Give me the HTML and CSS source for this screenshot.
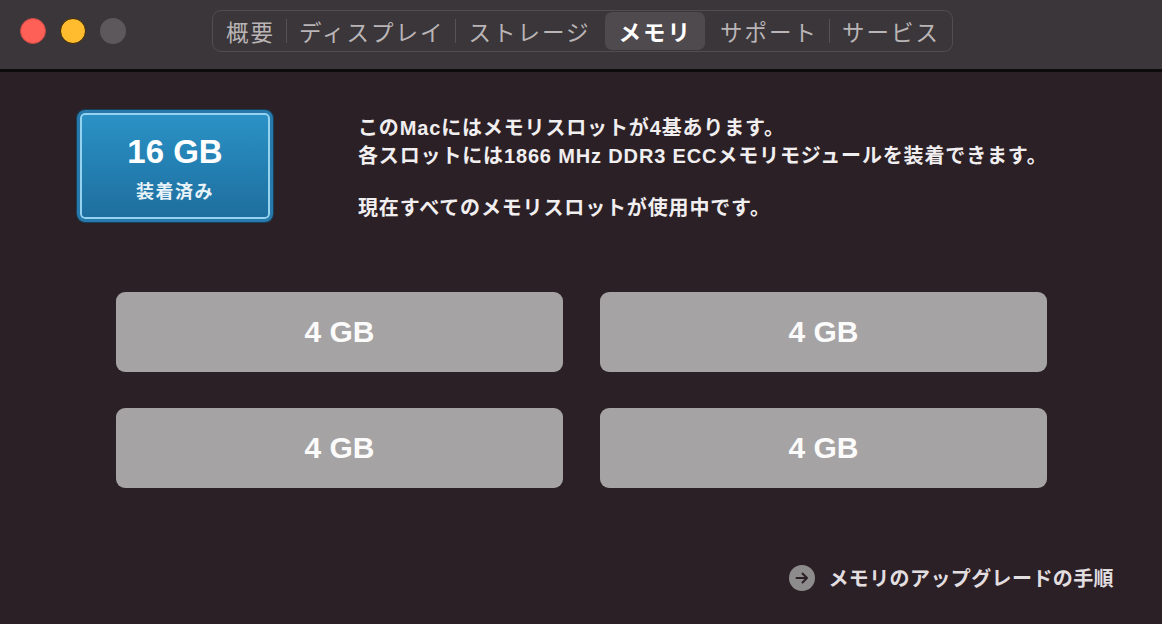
FILE: index.html
```html
<!DOCTYPE html>
<html lang="ja">
<head>
<meta charset="utf-8">
<title>このMacについて - メモリ</title>
<link rel="stylesheet" href="styles.css">
</head>
<body>
<div class="window">
  <header class="titlebar">
    <div class="lights">
      <span class="light red"></span>
      <span class="light yellow"></span>
      <span class="light gray"></span>
    </div>
    <nav class="tabs">
      <span class="tab">概要</span>
      <span class="sep"></span>
      <span class="tab">ディスプレイ</span>
      <span class="sep"></span>
      <span class="tab">ストレージ</span>
      <span class="tab active">メモリ</span>
      <span class="tab">サポート</span>
      <span class="sep"></span>
      <span class="tab">サービス</span>
    </nav>
  </header>
  <main class="content">
    <section class="summary">
      <div class="badge">
        <div class="badge-size">16 GB</div>
        <div class="badge-label">装着済み</div>
      </div>
      <div class="desc">
        <p>このMacにはメモリスロットが4基あります。<br>各スロットには1866 MHz DDR3 ECCメモリモジュールを装着できます。</p>
        <p>現在すべてのメモリスロットが使用中です。</p>
      </div>
    </section>
    <section class="slots">
      <div class="slot">4 GB</div>
      <div class="slot">4 GB</div>
      <div class="slot">4 GB</div>
      <div class="slot">4 GB</div>
    </section>
    <div class="link-row">
      <a class="upgrade" href="#">
        <svg class="arrow" width="26" height="26" viewBox="0 0 26 26">
          <circle cx="13" cy="13" r="13" fill="#8e8b8c"/>
          <path d="M7.5 13h10M13.5 8.5l4.5 4.5-4.5 4.5" fill="none" stroke="#2b2025" stroke-width="2" stroke-linecap="round" stroke-linejoin="round"/>
        </svg>
        <span>メモリのアップグレードの手順</span>
      </a>
    </div>
  </main>
</div>
</body>
</html>
```

FILE: styles.css
```css
* { box-sizing: border-box; }
html, body {
  margin: 0;
  padding: 0;
  width: 1162px;
  height: 624px;
  overflow: hidden;
  background: #2b2025;
  font-family: "Liberation Sans", "Noto Sans CJK JP", sans-serif;
}
.window {
  width: 1162px;
  height: 624px;
  display: flex;
  flex-direction: column;
}
.titlebar {
  height: 72px;
  flex: none;
  background: #3b3639;
  border-bottom: 3px solid #0e0b0d;
  display: flex;
  align-items: center;
  padding: 0 0 7px 20px;
}
.lights {
  display: flex;
  gap: 14px;
  width: 192px;
}
.light {
  width: 26px;
  height: 26px;
  border-radius: 50%;
  display: block;
}
.red { background: #fe5f57; border: 1px solid #c94a44; }
.yellow { background: #febc2e; border: 1px solid #3d2a05; }
.gray { background: #5c585b; }
.tabs {
  display: flex;
  align-items: center;
  height: 42px;
  border: 1px solid #524d50;
  border-radius: 9px;
  padding: 0 1px;
  font-family: "Noto Sans CJK JP", sans-serif;
}
.tab {
  font-size: 22.5px;
  letter-spacing: 2px;
  color: #b9b5b7;
  padding: 0 11px 0 12px;
  height: 38px;
  line-height: 38px;
  border-radius: 7px;
}
.tab.active {
  background: #4f4a4e;
  color: #ffffff;
  font-weight: 700;
  padding: 0 13px 0 14px;
  margin: 0 3px;
}
.sep {
  width: 1px;
  height: 24px;
  background: #575255;
}
.content {
  flex: 1;
  display: flex;
  flex-direction: column;
}
.summary {
  display: flex;
  padding: 38px 0 0 77px;
}
.badge {
  width: 196px;
  height: 112px;
  border-radius: 8px;
  border: 3px solid #2679aa;
  box-shadow: 0 0 0 1px #173f58, inset 0 0 0 2px #95d2ef;
  background: linear-gradient(#2b92c6, #1d6e9e);
  display: flex;
  flex-direction: column;
  align-items: center;
  color: #ffffff;
}
.badge-size {
  font-size: 33px;
  font-weight: 700;
  margin-top: 20px;
  line-height: 38px;
}
.badge-label {
  font-family: "Noto Sans CJK JP", sans-serif;
  font-size: 18px;
  font-weight: 700;
  letter-spacing: 1.5px;
  margin-top: 6px;
  color: #e8f3f9;
}
.desc {
  margin: 4px 0 0 85px;
  color: #f1eef0;
  font-size: 20px;
  letter-spacing: 0.85px;
  line-height: 28px;
  font-weight: 700;
}
.desc p { margin: 0 0 24px; }
.desc p:last-child { margin-bottom: 0; }
.slots {
  margin: 70px 0 0 116px;
  display: grid;
  grid-template-columns: 447px 447px;
  grid-auto-rows: 80px;
  column-gap: 37px;
  row-gap: 36px;
}
.slot {
  background: #a6a3a4;
  border-radius: 9px;
  display: flex;
  align-items: center;
  justify-content: center;
  color: #fbfbfb;
  font-size: 30px;
  font-weight: 700;
}
.link-row {
  display: flex;
  justify-content: flex-end;
  padding-right: 48px;
  margin-top: 75px;
}
.upgrade {
  display: flex;
  align-items: center;
  gap: 13px;
  text-decoration: none;
  color: #e2dee0;
  font-family: "Noto Sans CJK JP", sans-serif;
  font-size: 20px;
  font-weight: 700;
  letter-spacing: 0.4px;
}
.arrow { display: block; }
```
